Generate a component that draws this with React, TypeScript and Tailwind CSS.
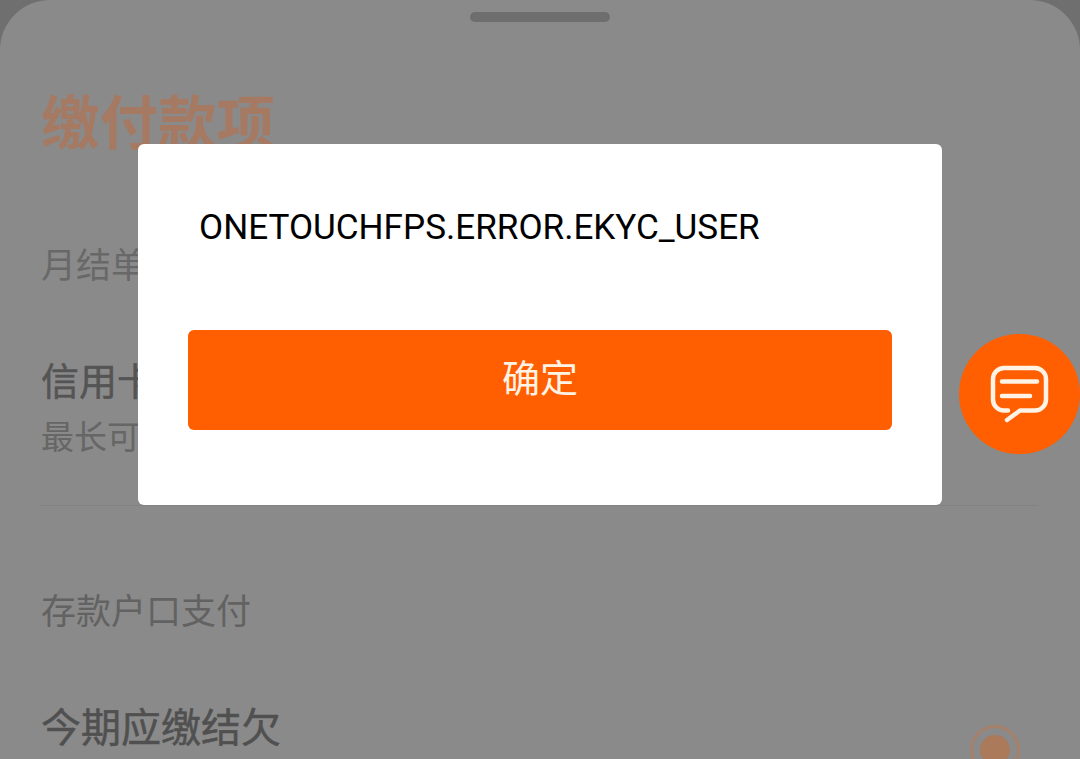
import React from 'react';

const cjk = "font-['Noto_Sans_CJK_SC','Noto_Sans',sans-serif]";

// Feuille de paiement assombrie derrière la boîte de dialogue
const Sheet = () => (
    <div className={`h-[759px] overflow-hidden rounded-t-[50px] bg-[#8a8a8a] px-[41px] ${cjk}`}>
        <div className="flex justify-center pt-3">
            <div className="h-2.5 w-[140px] rounded-full bg-[#6e6e6e]" />
        </div>
        <h1 className="mt-[61px] h-[72px] text-[58.5px] leading-[72px] font-bold text-[#a67962]">缴付款项</h1>
        <p className="mt-[88px] text-[35px] leading-[40px] text-[#686868]">月结单</p>
        <div className="mt-[74px] h-[122px]">
            <p className="text-[38px] leading-[44px] text-[#545454] [-webkit-text-stroke:0.5px_#545454]">信用卡</p>
            <p className="mt-[14px] text-[33px] leading-[40px] text-[#666666]">最长可</p>
        </div>
        <div className="mt-[26px] mr-[1px] h-px bg-[#828282]" />
        <p className="mt-[81px] text-[35px] leading-[44px] text-[#626262]">存款户口支付</p>
        <div className="mt-[70px] flex items-start justify-between">
            <p className="text-[40px] leading-[48px] text-[#505050] [-webkit-text-stroke:0.5px_#505050]">今期应缴结欠</p>
            <div className="mt-[22px] mr-[19px] flex h-[50px] w-[50px] shrink-0 translate-y-[2px] items-center justify-center rounded-full border-[3px] border-[#a5806a]">
                <div className="h-[30px] w-[30px] rounded-full bg-[#aa7a5a]" />
            </div>
        </div>
    </div>
);

// Bouton flottant du service client
const ChatFab = () => (
    <button className="absolute top-[334px] left-[959px] h-[120px] w-[121px] rounded-full bg-[#ff5f00]">
        <svg viewBox="0 0 120 120" className="ml-[1px] h-[120px] w-[120px]" fill="none" stroke="#fff3e6" strokeWidth="4.5" strokeLinecap="round" strokeLinejoin="round">
            <path d="M48 76.5H44a11 11 0 0 1-11-11V45a11 11 0 0 1 11-11H75a11 11 0 0 1 11 11V65.5a11 11 0 0 1-11 11H60L47 86" />
            <path d="M42 47.5H77" />
            <path d="M42 62H70" />
        </svg>
    </button>
);

export default function App() {
    return (
        <div className="relative h-[759px] w-[1080px] overflow-hidden bg-[#6f6f6f]">
            <Sheet />

            {/* Boîte de dialogue d'erreur */}
            <div className="absolute top-[144px] left-[138px] flex h-[361px] w-[804px] flex-col rounded-md bg-white px-[50px]">
                <p className="mt-[61px] ml-[11px] h-[125px] font-['Roboto',sans-serif] text-[35.1px] leading-[44px] text-black">
                    ONETOUCHFPS.ERROR.EKYC_USER
                </p>
                <button className={`h-[100px] w-full rounded-md bg-[#ff5f00] pb-[9px] text-[38px] text-[#fff3e6] ${cjk}`}>
                    确定
                </button>
            </div>

            <ChatFab />
        </div>
    );
}
